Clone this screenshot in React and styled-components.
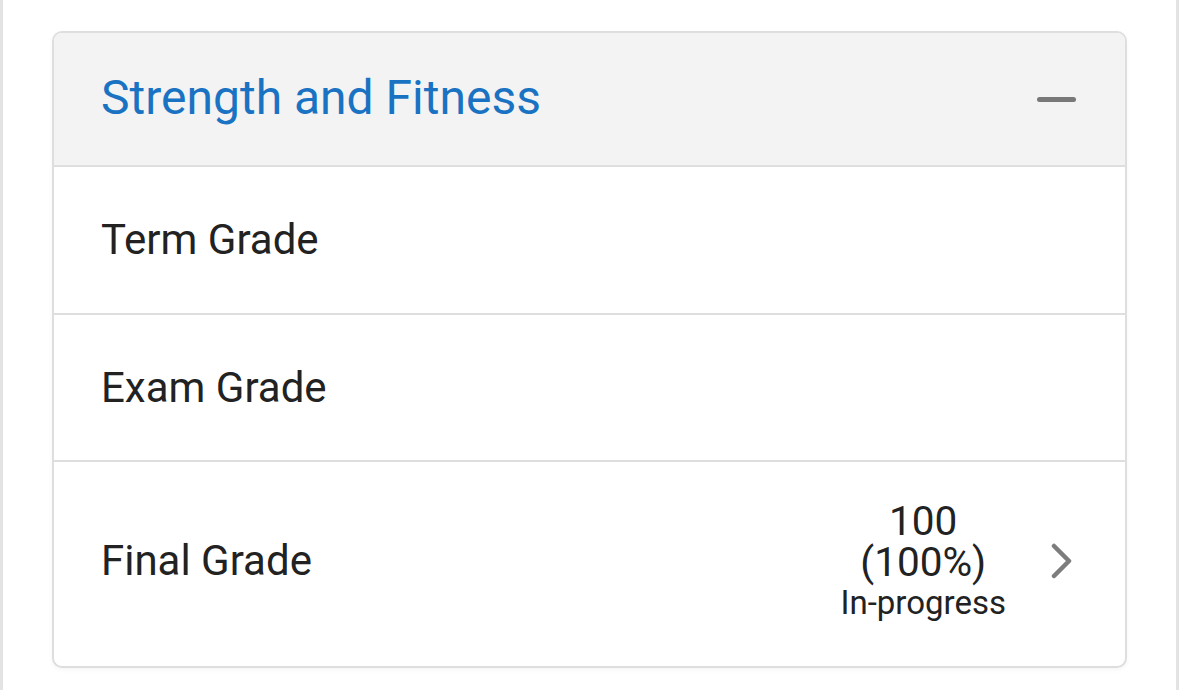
import React from "react";
import styled, { createGlobalStyle } from "styled-components";

const Global = createGlobalStyle`
  html, body { margin: 0; padding: 0; background: #fff; }
  body { font-family: Roboto, "Noto Sans", Arial, sans-serif; }
`;

const Page = styled.div`
  box-sizing: border-box;
  min-height: 690px;
  border-left: 3px solid #e3e3e3;
  border-right: 3px solid #e3e3e3;
  padding: 31px 49px 22px;
  background: #fff;
`;

const Card = styled.div`
  border: 2px solid #dedede;
  border-radius: 10px;
  overflow: hidden;
  background: #fff;
  box-shadow: 0 2px 4px rgba(0, 0, 0, 0.04);
`;

const Header = styled.div`
  height: 132px;
  background: #f3f3f3;
  border-bottom: 2px solid #dedede;
  display: flex;
  align-items: center;
  justify-content: space-between;
  padding: 0 49px 0 47px;
`;

const Title = styled.div`
  color: #1a72c2;
  font-size: 48px;
  font-weight: 400;
  line-height: 1;
  margin-top: -3px;
`;

const Minus = styled.span`
  display: block;
  width: 39px;
  height: 5px;
  border-radius: 3px;
  background: #787878;
`;

const Row = styled.div`
  height: ${(p) => p.$h}px;
  display: flex;
  align-items: center;
  justify-content: space-between;
  padding: 0 52px 0 47px;
  border-bottom: ${(p) => (p.$last ? "none" : "2px solid #dedede")};
`;

const Label = styled.div`
  color: #222;
  font-size: 42px;
  line-height: 1;
  margin-top: ${(p) => p.$mt || 0}px;
`;

const Right = styled.div`
  display: flex;
  align-items: center;
  gap: 45px;
`;

const Value = styled.div`
  display: flex;
  flex-direction: column;
  align-items: center;
  color: #222;
  margin-top: -9px;
`;

const Score = styled.div`
  font-size: 40.5px;
  line-height: 41px;
`;

const Status = styled.div`
  font-size: 33px;
  line-height: 33px;
  margin-top: 3px;
`;

const Chevron = () => (
  <svg width="22" height="36" viewBox="0 0 22 36" style={{ display: "block", marginTop: -6 }}>
    <polyline
      points="3,3 18,18 3,33"
      fill="none"
      stroke="#7d7d7d"
      strokeWidth="4.5"
      strokeLinecap="round"
      strokeLinejoin="round"
    />
  </svg>
);

export default function App() {
  return (
    <>
      <Global />
      <Page>
        <Card>
          <Header>
            <Title>Strength and Fitness</Title>
            <Minus />
          </Header>
          <Row $h={146}>
            <Label>Term Grade</Label>
          </Row>
          <Row $h={145}>
            <Label>Exam Grade</Label>
          </Row>
          <Row $h={204} $last>
            <Label $mt={-6}>Final Grade</Label>
            <Right>
              <Value>
                <Score>100</Score>
                <Score>(100%)</Score>
                <Status>In-progress</Status>
              </Value>
              <Chevron />
            </Right>
          </Row>
        </Card>
      </Page>
    </>
  );
}
